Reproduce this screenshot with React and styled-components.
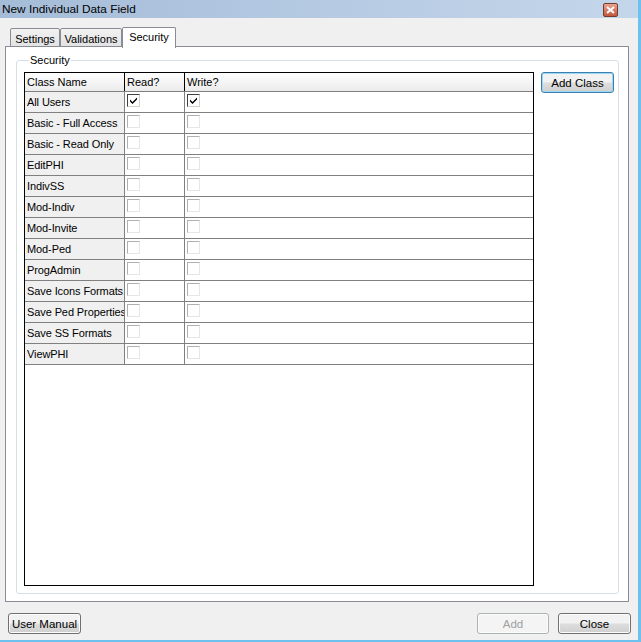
import React from "react"
import styled, { createGlobalStyle } from "styled-components"

const GlobalStyle = createGlobalStyle`
  html, body {
    margin: 0;
    padding: 0;
    background: #f0f0f0;
  }
  * { box-sizing: border-box; }
`

const rows = [
  { name: "All Users", read: true, write: true },
  { name: "Basic - Full Access" },
  { name: "Basic - Read Only" },
  { name: "EditPHI" },
  { name: "IndivSS" },
  { name: "Mod-Indiv" },
  { name: "Mod-Invite" },
  { name: "Mod-Ped" },
  { name: "ProgAdmin" },
  { name: "Save Icons Formats" },
  { name: "Save Ped Properties" },
  { name: "Save SS Formats" },
  { name: "ViewPHI" },
]

const tabs = [
  { label: "Settings", w: 50 },
  { label: "Validations", w: 62 },
  { label: "Security", w: 54, active: true },
]

const Window = styled.div`
  width: 641px;
  height: 642px;
  display: flex;
  flex-direction: column;
  background: #f0f0f0;
  font-family: "Liberation Sans", Arial, sans-serif;
  font-size: 11px;
  color: #000;
  border-right: 3px solid #6dc1ee;
  border-bottom: 2px solid #6dc1ee;
  overflow: hidden;
`

const TitleBar = styled.div`
  height: 18px;
  flex: none;
  display: flex;
  align-items: center;
  justify-content: space-between;
  padding: 0 20px 0 2px;
  background: linear-gradient(to right, #a5bcd8, #b8cce4 60%, #c4d6ea);
  font-size: 11.8px;
`

const CloseBox = styled.div`
  width: 15px;
  height: 14px;
  margin-top: 2px;
  border: 1px solid #7a3a2a;
  border-radius: 2px;
  background: linear-gradient(#e8a593, #c3563c);
  display: flex;
  align-items: center;
  justify-content: center;
`

const Body = styled.div`
  flex: 1;
  display: flex;
  flex-direction: column;
  padding: 8px 5px 0 5px;
`

const TabStrip = styled.div`
  display: flex;
  align-items: flex-end;
  padding-left: 5px;
  height: 21px;
  position: relative;
  z-index: 1;
`

const Tab = styled.div`
  width: ${({ w }) => w}px;
  height: ${({ active }) => (active ? "21px" : "19px")};
  padding-top: ${({ active }) => (active ? "3px" : "4px")};
  text-align: center;
  border: 1px solid #898c95;
  border-bottom: ${({ active }) => (active ? "none" : "1px solid #898c95")};
  border-radius: 2px 2px 0 0;
  background: ${({ active }) =>
    active ? "#fff" : "linear-gradient(#f2f2f2, #e3e3e3)"};
  margin-bottom: ${({ active }) => (active ? "-1px" : "0")};
`

const Panel = styled.div`
  height: 556px;
  margin-top: -1px;
  margin-right: 4px;
  border: 1px solid #898c95;
  background: #fff;
  padding: 8px 9px 7px 10px;
  display: flex;
`

const Group = styled.fieldset`
  flex: 1;
  margin: 0;
  border: 1px solid #d5dfe5;
  border-radius: 3px;
  padding: 7px 0 7px 7px;
  display: flex;
  gap: 7px;
  align-items: flex-start;
  min-width: 0;
`

const Legend = styled.legend`
  padding: 0 1px;
  margin-left: 5px;
  line-height: 10px;
`

const Grid = styled.div`
  width: 510px;
  height: 514px;
  border: 1px solid #000;
  background: #fff;
  display: flex;
  flex-direction: column;
`

const Row = styled.div`
  display: grid;
  grid-template-columns: 100px 60px 1fr;
  height: ${({ header }) => (header ? "19px" : "21px")};
  border-bottom: 1px solid #808080;
  background: ${({ header }) =>
    header ? "linear-gradient(#fefefe, #ececec)" : "#fff"};
`

const Cell = styled.div`
  display: flex;
  align-items: ${({ header }) => (header ? "center" : "flex-start")};
  padding: ${({ header }) => (header ? "0 2px" : "2px 0 0 2px")};
  border-right: 1px solid ${({ header }) => (header ? "#000" : "#808080")};
  background: ${({ shade }) => (shade ? "#f0f0f0" : "transparent")};
  white-space: nowrap;
  overflow: hidden;
  line-height: 16px;
  letter-spacing: ${({ shade }) => (shade ? "-0.1px" : "0")};

  &:last-child {
    border-right: none;
  }
`

const Check = styled.div`
  width: 13px;
  height: 13px;
  border-style: solid;
  border-width: 1px;
  border-color: ${({ on }) =>
    on ? "#404040 #d4d0c8 #d4d0c8 #404040" : "#b0b0b0 #e6e6e6 #e6e6e6 #b0b0b0"};
  background: #fff;
  display: flex;
  align-items: center;
  justify-content: center;
`

const Button = styled.div`
  width: ${({ w }) => w}px;
  height: 21px;
  display: flex;
  align-items: center;
  justify-content: center;
  border: 1px solid ${({ disabled, focus }) =>
    disabled ? "#adb2b5" : focus ? "#3c7fb1" : "#707070"};
  border-radius: 3px;
  background: ${({ disabled }) =>
    disabled ? "#f4f4f4" : "linear-gradient(#f2f2f2 45%, #dddddd 55%, #cfcfcf)"};
  box-shadow: ${({ focus }) => (focus ? "inset 0 0 0 1px #9ad7f3" : "inset 0 0 0 1px #fcfcfc")};
  color: ${({ disabled }) => (disabled ? "#a0a0a0" : "#000")};
  font-size: 11.5px;
  flex: none;
`

const Footer = styled.div`
  flex: 1;
  display: flex;
  align-items: center;
  padding: 5px 2px 0 3px;
  gap: 9px;
`

const Spacer = styled.div`
  flex: 1;
`

const Tick = () => (
  <svg width="9" height="9" viewBox="0 0 9 9">
    <path d="M1 3.5 L3.5 6 L8 1.5 L8 3.5 L3.5 8 L1 5.5 Z" fill="#000" />
  </svg>
)

export default function App() {
  return (
    <>
      <GlobalStyle />
      <Window>
        <TitleBar>
          <span>New Individual Data Field</span>
          <CloseBox>
            <svg width="9" height="8" viewBox="0 0 9 8">
              <path d="M1 1 L8 7 M8 1 L1 7" stroke="#fff" strokeWidth="2" />
            </svg>
          </CloseBox>
        </TitleBar>
        <Body>
          <TabStrip>
            {tabs.map((t) => (
              <Tab key={t.label} w={t.w} active={t.active}>
                {t.label}
              </Tab>
            ))}
          </TabStrip>
          <Panel>
            <Group>
              <Legend>Security</Legend>
              <Grid>
                <Row header>
                  <Cell header>Class Name</Cell>
                  <Cell header>Read?</Cell>
                  <Cell header>Write?</Cell>
                </Row>
                {rows.map((r) => (
                  <Row key={r.name}>
                    <Cell shade>{r.name}</Cell>
                    <Cell>
                      <Check on={r.read}>{r.read && <Tick />}</Check>
                    </Cell>
                    <Cell>
                      <Check on={r.write}>{r.write && <Tick />}</Check>
                    </Cell>
                  </Row>
                ))}
              </Grid>
              <Button w={73} focus>
                Add Class
              </Button>
            </Group>
          </Panel>
          <Footer>
            <Button w={73}>User Manual</Button>
            <Spacer />
            <Button w={72} disabled>
              Add
            </Button>
            <Button w={73}>Close</Button>
          </Footer>
        </Body>
      </Window>
    </>
  )
}
